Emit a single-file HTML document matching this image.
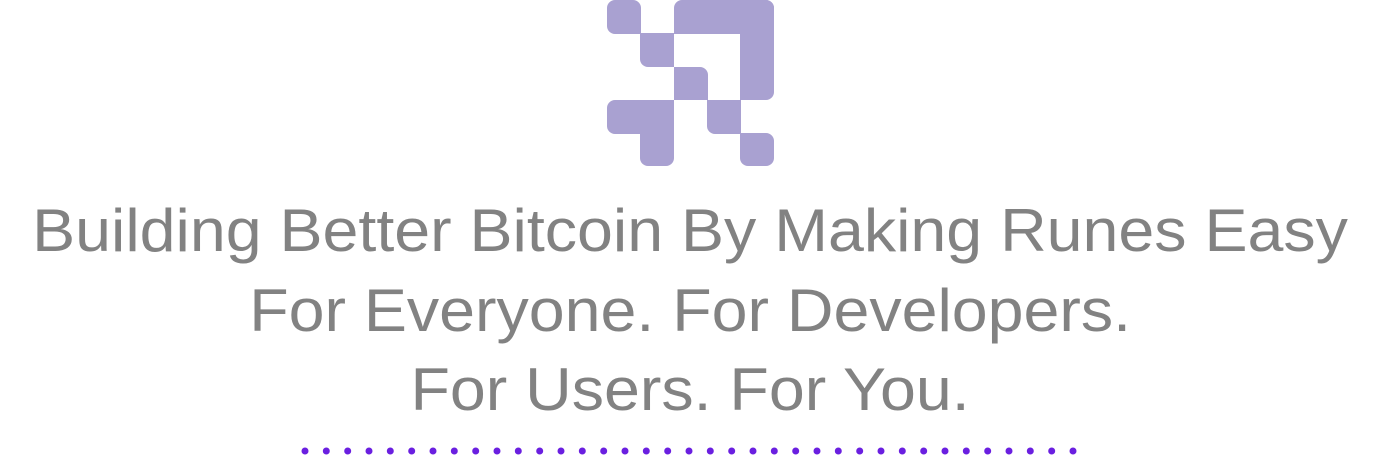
<!DOCTYPE html>
<html><head><style>
body{margin:0;width:1380px;height:455px;background:#fff;overflow:hidden;position:relative;font-family:"Liberation Sans",sans-serif}
.t{position:absolute;left:0;width:1380px;text-align:center;color:#828282;font-size:60px;line-height:80px;white-space:nowrap}
.t span{display:inline-block;transform:scaleX(1.075);transform-origin:center}
</style></head><body>
<svg width="1380" height="170" style="position:absolute;left:0;top:0" fill="#a9a1d1">
<rect x="607" y="0" width="34" height="34" rx="8"/>
<rect x="640" y="33" width="34" height="34" rx="8"/>
<rect x="674" y="0" width="100" height="34" rx="8"/>
<rect x="740" y="0" width="34" height="100" rx="8"/>
<rect x="674" y="67" width="34" height="33" rx="8"/>
<rect x="607" y="100" width="67" height="34" rx="8"/>
<rect x="640" y="110" width="34" height="56" rx="8"/>
<rect x="707" y="100" width="34" height="34" rx="8"/>
<rect x="740" y="133" width="34" height="33" rx="8"/>
<!-- sharp corners at diagonal joins -->
<rect x="625" y="18" width="16" height="16"/>
<rect x="640" y="33" width="16" height="16"/>
<rect x="658" y="33" width="16" height="16"/>
<rect x="674" y="18" width="16" height="16"/>
<rect x="658" y="51" width="16" height="16"/>
<rect x="674" y="67" width="16" height="16"/>
<rect x="674" y="84" width="16" height="16"/>
<rect x="658" y="100" width="16" height="16"/>
<rect x="692" y="84" width="16" height="16"/>
<rect x="707" y="100" width="16" height="16"/>
<rect x="725" y="100" width="16" height="16"/>
<rect x="740" y="84" width="16" height="16"/>
<rect x="725" y="118" width="16" height="16"/>
<rect x="740" y="133" width="16" height="16"/>
</svg>
<div class="t" style="top:191px"><span>Building Better Bitcoin By Making Runes Easy</span></div>
<div class="t" style="top:271px"><span>For Everyone. For Developers.</span></div>
<div class="t" style="top:350px"><span>For Users. For You.</span></div>
<svg width="1380" height="455" style="position:absolute;left:0;top:0" fill="#6a1fe0">
<circle cx="305.0" cy="451" r="3.5"/><circle cx="326.3" cy="451" r="3.5"/><circle cx="347.7" cy="451" r="3.5"/><circle cx="369.0" cy="451" r="3.5"/><circle cx="390.3" cy="451" r="3.5"/><circle cx="411.7" cy="451" r="3.5"/><circle cx="433.0" cy="451" r="3.5"/><circle cx="454.3" cy="451" r="3.5"/><circle cx="475.7" cy="451" r="3.5"/><circle cx="497.0" cy="451" r="3.5"/><circle cx="518.3" cy="451" r="3.5"/><circle cx="539.7" cy="451" r="3.5"/><circle cx="561.0" cy="451" r="3.5"/><circle cx="582.3" cy="451" r="3.5"/><circle cx="603.7" cy="451" r="3.5"/><circle cx="625.0" cy="451" r="3.5"/><circle cx="646.3" cy="451" r="3.5"/><circle cx="667.7" cy="451" r="3.5"/><circle cx="689.0" cy="451" r="3.5"/><circle cx="710.3" cy="451" r="3.5"/><circle cx="731.7" cy="451" r="3.5"/><circle cx="753.0" cy="451" r="3.5"/><circle cx="774.3" cy="451" r="3.5"/><circle cx="795.7" cy="451" r="3.5"/><circle cx="817.0" cy="451" r="3.5"/><circle cx="838.3" cy="451" r="3.5"/><circle cx="859.7" cy="451" r="3.5"/><circle cx="881.0" cy="451" r="3.5"/><circle cx="902.3" cy="451" r="3.5"/><circle cx="923.7" cy="451" r="3.5"/><circle cx="945.0" cy="451" r="3.5"/><circle cx="966.3" cy="451" r="3.5"/><circle cx="987.7" cy="451" r="3.5"/><circle cx="1009.0" cy="451" r="3.5"/><circle cx="1030.3" cy="451" r="3.5"/><circle cx="1051.7" cy="451" r="3.5"/><circle cx="1073.0" cy="451" r="3.5"/>
</svg>
</body></html>
